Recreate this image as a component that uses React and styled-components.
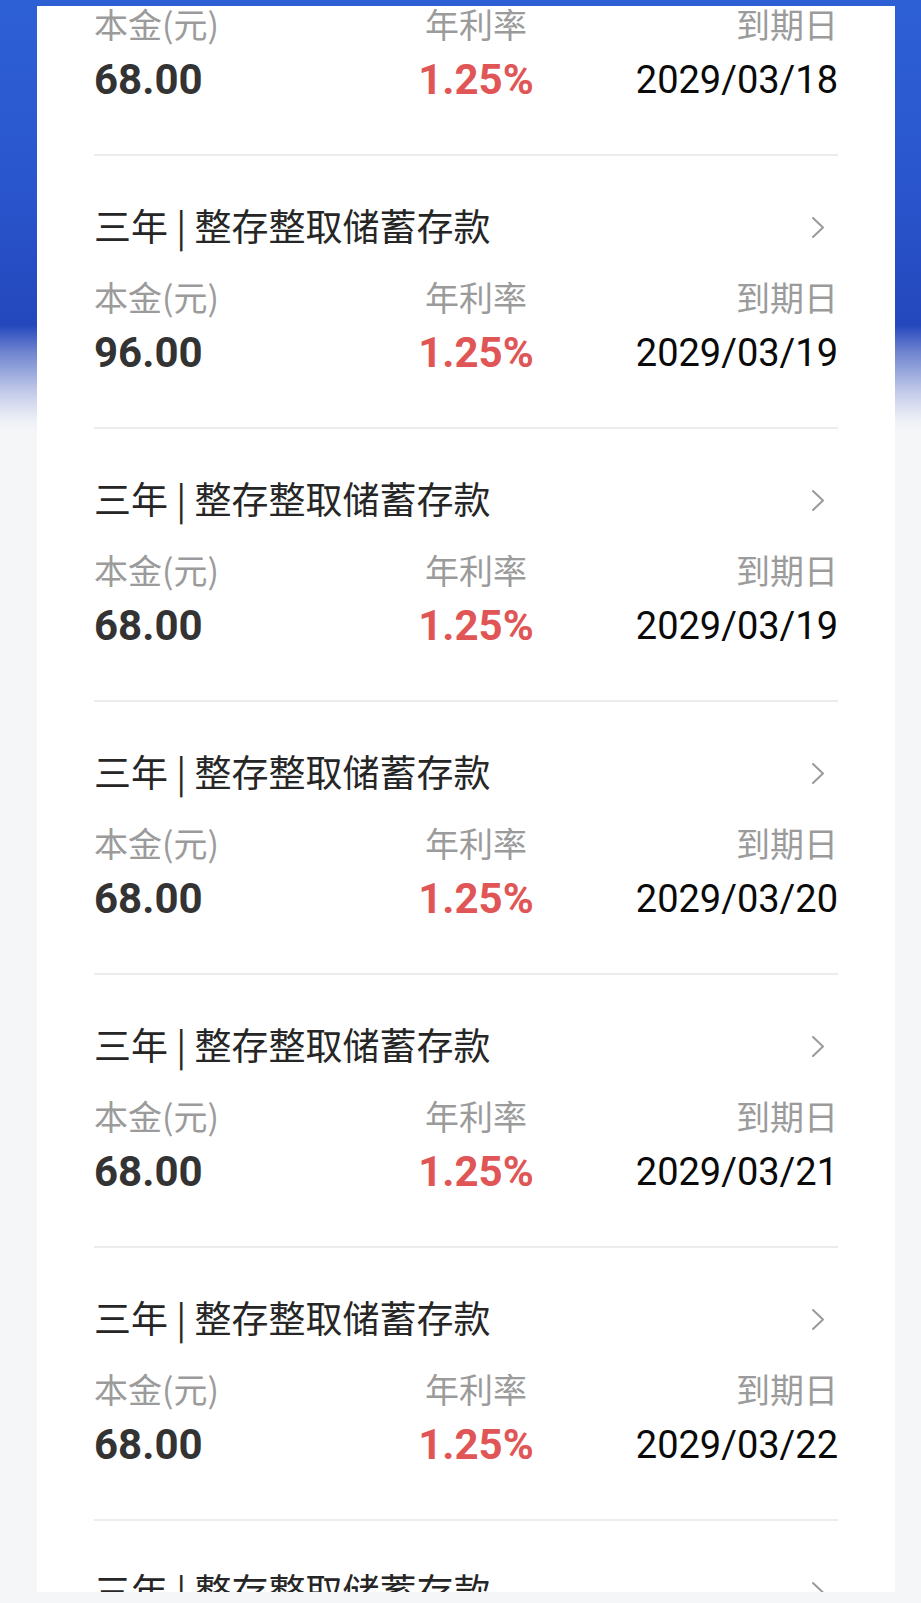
import React from "react";
import styled, { createGlobalStyle } from "styled-components";

const GlobalStyle = createGlobalStyle`
  html, body {
    margin: 0;
    padding: 0;
    background: #f5f6f8;
  }
  * {
    box-sizing: border-box;
  }
`;

const Page = styled.div`
  width: 921px;
  height: 1603px;
  overflow: hidden;
  padding: 6px 26px 0 37px;
  background:
    linear-gradient(
      180deg,
      #2e60d5 0px,
      #2a56cd 180px,
      #2447bd 325px,
      #6f84cf 352px,
      #c3cbea 392px,
      #eef0f6 420px,
      #f5f6f8 432px
    ) top / 100% 432px no-repeat,
    #f5f6f8;
`;

const Card = styled.div`
  height: 1586px;
  overflow: hidden;
  background: #fff;
  padding: 0 57px;
`;

// the list is scrolled, the first deposit is half out of view
const List = styled.div`
  margin-top: -123px;
`;

const Item = styled.div`
  padding: 45px 0 52px;
  border-bottom: 2px solid #ececec;
`;

const TitleRow = styled.div`
  display: flex;
  align-items: center;
  justify-content: space-between;
  height: 48px;
  margin-bottom: 28px;
`;

const Title = styled.div`
  font-family: "Noto Sans CJK SC", sans-serif;
  font-size: 37px;
  line-height: 48px;
  color: #262626;
  font-weight: 400;
  white-space: nowrap;
`;

const Arrow = styled.svg`
  width: 14px;
  height: 23px;
  margin-right: 13px;
  margin-top: 4px;
  flex: none;
`;

const Stats = styled.div`
  display: flex;
`;

const Column = styled.div`
  display: flex;
  flex-direction: column;
  flex: ${(p) => (p.$align === "center" ? "none" : "1")};
  align-items: ${(p) =>
    p.$align === "center" ? "center" : p.$align === "right" ? "flex-end" : "flex-start"};
  margin-left: ${(p) => (p.$align === "center" ? "20px" : "0")};
`;

const Label = styled.div`
  font-family: "Noto Sans CJK SC", sans-serif;
  font-size: 34px;
  line-height: 40px;
  color: #9b9b9b;
  margin-bottom: 14px;
  white-space: nowrap;
`;

const Value = styled.div`
  font-family: Roboto, "Noto Sans CJK SC", sans-serif;
  font-size: ${(p) => (p.$kind === "date" ? "38px" : "42px")};
  font-weight: ${(p) => (p.$kind === "date" ? 400 : 700)};
  line-height: 44px;
  white-space: nowrap;
  color: ${(p) =>
    p.$kind === "rate" ? "#e05656" : p.$kind === "date" ? "#0a0a0a" : "#333"};
`;

const Chevron = () => (
  <Arrow viewBox="0 0 14 23">
    <polyline
      points="2,2 12,11.5 2,21"
      fill="none"
      stroke="#9a9a9a"
      strokeWidth="2"
      strokeLinecap="round"
      strokeLinejoin="round"
    />
  </Arrow>
);

const deposits = [
  { amount: "68.00", rate: "1.25%", due: "2029/03/18" },
  { amount: "96.00", rate: "1.25%", due: "2029/03/19" },
  { amount: "68.00", rate: "1.25%", due: "2029/03/19" },
  { amount: "68.00", rate: "1.25%", due: "2029/03/20" },
  { amount: "68.00", rate: "1.25%", due: "2029/03/21" },
  { amount: "68.00", rate: "1.25%", due: "2029/03/22" },
  { amount: "68.00", rate: "1.25%", due: "2029/03/23" },
];

const DepositItem = ({ amount, rate, due }) => (
  <Item>
    <TitleRow>
      <Title>三年 | 整存整取储蓄存款</Title>
      <Chevron />
    </TitleRow>
    <Stats>
      <Column $align="left">
        <Label>本金(元)</Label>
        <Value>{amount}</Value>
      </Column>
      <Column $align="center">
        <Label>年利率</Label>
        <Value $kind="rate">{rate}</Value>
      </Column>
      <Column $align="right">
        <Label>到期日</Label>
        <Value $kind="date">{due}</Value>
      </Column>
    </Stats>
  </Item>
);

export default function App() {
  return (
    <>
      <GlobalStyle />
      <Page>
        <Card>
          <List>
            {deposits.map((d, i) => (
              <DepositItem key={i} {...d} />
            ))}
          </List>
        </Card>
      </Page>
    </>
  );
}
